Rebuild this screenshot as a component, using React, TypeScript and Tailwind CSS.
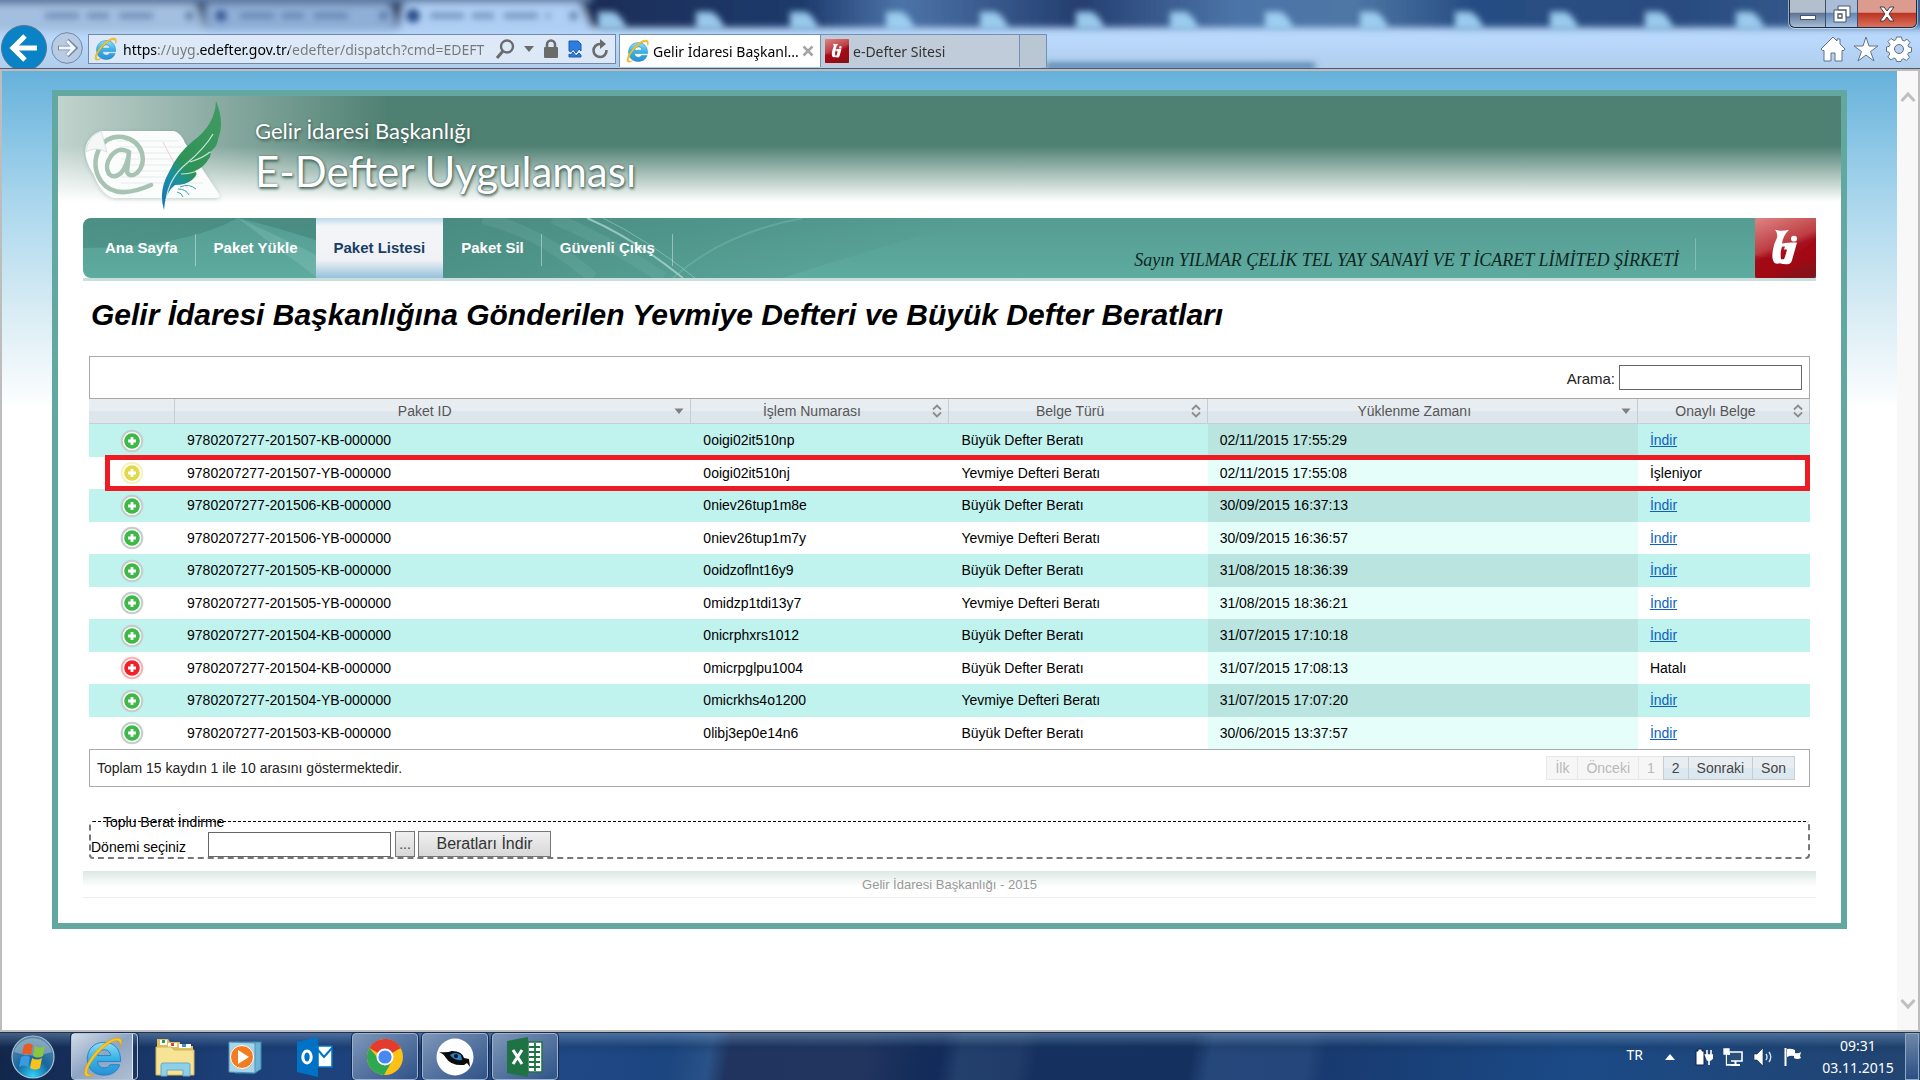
import type { ReactNode } from "react";
import { clsx } from "clsx";

type Status = "ok" | "pending" | "error";

interface Row {
  status: Status;
  packageId: string;
  processNo: string;
  type: string;
  uploadedAt: string;
  result?: string;
  highlighted?: boolean;
}

const KB = "Büyük Defter Beratı";
const YB = "Yevmiye Defteri Beratı";

const rows: Row[] = [
  { status: "ok", packageId: "9780207277-201507-KB-000000", processNo: "0oigi02it510np", type: KB, uploadedAt: "02/11/2015 17:55:29" },
  { status: "pending", packageId: "9780207277-201507-YB-000000", processNo: "0oigi02it510nj", type: YB, uploadedAt: "02/11/2015 17:55:08", result: "İşleniyor", highlighted: true },
  { status: "ok", packageId: "9780207277-201506-KB-000000", processNo: "0niev26tup1m8e", type: KB, uploadedAt: "30/09/2015 16:37:13" },
  { status: "ok", packageId: "9780207277-201506-YB-000000", processNo: "0niev26tup1m7y", type: YB, uploadedAt: "30/09/2015 16:36:57" },
  { status: "ok", packageId: "9780207277-201505-KB-000000", processNo: "0oidzoflnt16y9", type: KB, uploadedAt: "31/08/2015 18:36:39" },
  { status: "ok", packageId: "9780207277-201505-YB-000000", processNo: "0midzp1tdi13y7", type: YB, uploadedAt: "31/08/2015 18:36:21" },
  { status: "ok", packageId: "9780207277-201504-KB-000000", processNo: "0nicrphxrs1012", type: KB, uploadedAt: "31/07/2015 17:10:18" },
  { status: "error", packageId: "9780207277-201504-KB-000000", processNo: "0micrpglpu1004", type: KB, uploadedAt: "31/07/2015 17:08:13", result: "Hatalı" },
  { status: "ok", packageId: "9780207277-201504-YB-000000", processNo: "0micrkhs4o1200", type: YB, uploadedAt: "31/07/2015 17:07:20" },
  { status: "ok", packageId: "9780207277-201503-KB-000000", processNo: "0libj3ep0e14n6", type: KB, uploadedAt: "30/06/2015 13:37:57" },
];

const columns: { label: string; width: string; sort?: "down" | "both" }[] = [
  { label: "", width: "w-[5%]" },
  { label: "Paket ID", width: "w-[30%]", sort: "down" },
  { label: "İşlem Numarası", width: "w-[15%]", sort: "both" },
  { label: "Belge Türü", width: "w-[15%]", sort: "both" },
  { label: "Yüklenme Zamanı", width: "w-[25%]", sort: "down" },
  { label: "Onaylı Belge", width: "w-[10%]", sort: "both" },
];

/* ---------- icons ---------- */

function IeIcon({ className }: { className?: string }) {
  return (
    <svg viewBox="0 0 24 24" className={className} aria-hidden="true">
      <defs>
        <linearGradient id="ieBlue" x1="0" y1="0" x2="0" y2="1">
          <stop offset="0" stopColor="#8fdcf8" />
          <stop offset="0.5" stopColor="#37b2e8" />
          <stop offset="1" stopColor="#2a8fd2" />
        </linearGradient>
      </defs>
      <path
        d="M22.6 14.6H9.4c.2 2.2 1.7 3.6 3.8 3.6 1.5 0 2.6-.6 3.3-1.8h5.6c-1.300 3.900-4.500 6-9 6-5.700 0-9.500-3.700-9.500-9.300S7.500 3.600 13.100 3.600c6 0 9.700 4 9.500 11zM17 11.200c-.200-2-1.600-3.300-3.700-3.300s-3.500 1.300-3.800 3.300z"
        fill="url(#ieBlue)"
        stroke="#1c7fc0"
        strokeWidth=".5"
      />
      <path
        d="M22.800 6.500c.9-2.600.7-4.600-.8-5.200-3-1.200-9.300 2.500-14.200 8.400C3.300 15.200.7 21 2.600 22.700c1 .9 2.900.4 5.100-1-2.300.7-3.700.6-4-.5-.6-2 1.900-6.600 6-11.200C14.200 5 19 1.900 21.200 2.800c1.100.4 1.500 1.700 1.600 3.700z"
        fill="#f8c820"
        stroke="#d99c1b"
        strokeWidth=".4"
      />
    </svg>
  );
}

function GibIcon({ className }: { className?: string }) {
  return (
    <svg viewBox="0 0 61 61" preserveAspectRatio="none" className={className} aria-hidden="true">
      <defs>
        <linearGradient id="gibRed" x1="0.1" y1="0" x2="0.5" y2="1">
          <stop offset="0" stopColor="#dd8080" />
          <stop offset="0.48" stopColor="#bd3e43" />
          <stop offset="0.6" stopColor="#a60f1b" />
          <stop offset="0.85" stopColor="#a00f18" />
          <stop offset="1" stopColor="#7d1a20" />
        </linearGradient>
      </defs>
      <rect width="61" height="61" rx="2" fill="url(#gibRed)" />
      <path d="M0 38Q30 48 61 21V50Q61 61 50 61H0z" fill="#a0000f" opacity=".35" />
      <path
        fillRule="evenodd"
        d="M20 12q6 2 14 0-6 6-7 14 6-1 10-1h5l-5 18q-1 4-5 4-5 0-7-1-3 1-5 0-4-3-2-14 1-6 4-12 1-5-2-8zM27 29q-2 6-1 13h3q2-5 3-10h-3l1-3z"
        fill="#fff"
      />
      <circle cx="39" cy="21" r="3" fill="#fff" />
    </svg>
  );
}

function StatusIcon({ status }: { status: Status }) {
  return (
    <svg
      viewBox="0 0 24 24"
      aria-hidden="true"
      className={clsx(
        "mx-auto size-6",
        status === "ok" && "text-[#3db948]",
        status === "pending" && "text-[#e2d94a]",
        status === "error" && "text-[#f01f28]",
      )}
    >
      <circle cx="12" cy="12" r="10.300" fill="#fff" stroke={status === "ok" ? "#c3cdca" : "currentColor"} strokeOpacity={status === "ok" ? 1 : 0.35} strokeWidth="2" />
      <circle cx="12" cy="12" r="7.800" fill="currentColor" />
      <path d="M12 8v8M8 12h8" stroke="#fff" strokeWidth="2.800" />
    </svg>
  );
}

function SortIcon({ kind }: { kind: "down" | "both" }) {
  if (kind === "down") {
    return (
      <svg viewBox="0 0 10 14" className="h-3.5 w-2.5" aria-hidden="true">
        <path d="M.5 4.500h9L5 10z" fill="#808080" />
      </svg>
    );
  }
  return (
    <svg viewBox="0 0 10 14" className="h-3.5 w-2.5" aria-hidden="true">
      <path d="M1 5.500l4-4 4 4M1 8.500l4 4 4-4" fill="none" stroke="#8c8c8c" strokeWidth="1.800" />
    </svg>
  );
}

function FeatherLogo() {
  return (
    <svg viewBox="0 0 140 124" className="h-[124px] w-[140px] shrink-0" aria-hidden="true">
      <defs>
        <linearGradient id="feather" x1="0.8" y1="0" x2="0.2" y2="1">
          <stop offset="0" stopColor="#3f9a62" />
          <stop offset="0.6" stopColor="#2f9257" />
          <stop offset="0.78" stopColor="#1a90a0" />
          <stop offset="1" stopColor="#1978b4" />
        </linearGradient>
        <filter id="paperShadow" x="-10%" y="-10%" width="120%" height="130%">
          <feDropShadow dx="0" dy="1" stdDeviation="2" floodColor="#4c7a6c" floodOpacity=".35" />
        </filter>
      </defs>
      <path d="M18 35h73q7 2 11 12l34 51q2 4-3 4H30q-12-4-19-23Q0 62 3 50q4-12 15-15z" fill="#fbfcfc" filter="url(#paperShadow)" />
      <path d="M34 45h62M36 51h63M37 57h66M38 63h68M38 69h70M38 75h74M38 81h78M38 87h82" stroke="#e3e9ea" strokeWidth=".8" />
      <path d="M80 46l24 46" stroke="#f3cfd3" strokeWidth="1" />
      <g fill="none" stroke="#a7c3b4" strokeLinecap="round">
        <path d="M46 56Q36 50 28 60q-7 10-2 18 5 5 12-1 6-7 8-20l-2 19q3 6 10 1 8-8 5-20-4-13-19-16-16-2-24 12-8 17 2 32 14 20 50 4" strokeWidth="4.500" />
      </g>
      <path d="M18 35L24 56Q12 50 3 56q2-16 15-21z" fill="#f4f7f6" stroke="#cfdad6" strokeWidth=".7" />
      <path d="M133 5q9 22 2 38 0 7-8 13 2 3-2 8-4 7-13 11 4 3-3 9-6 5-17 5-10 7-11 25-6-19 5-38 8-18 24-31 22-16 23-40z" fill="url(#feather)" />
      <path d="M83 104q3-22 20-36 19-16 27-30M107 66q13-4 20-10M98 78q10 0 18-4" stroke="#e3f3ea" strokeWidth="1.200" fill="none" opacity=".85" />
      <path d="M97 91q9-4 16 2M95 93q8 0 11 6M94 96q5 1 6 5" stroke="#3ba3ae" strokeWidth="1" fill="none" />
    </svg>
  );
}

/* ---------- browser chrome ---------- */

function GlassBackground() {
  const pads = [612, 710, 804, 900, 994, 1090, 1184, 1279, 1374, 1469, 1564, 1659, 1750];
  return (
    <svg viewBox="0 0 1920 69" preserveAspectRatio="none" className="absolute inset-0 size-full" aria-hidden="true">
      <defs>
        <linearGradient id="glassTop" x1="0" x2="1">
          <stop offset="0.3" stopColor="#192c55" />
          <stop offset="0.42" stopColor="#1e3b6c" />
          <stop offset="0.47" stopColor="#4d74a8" />
          <stop offset="0.56" stopColor="#243e70" />
          <stop offset="0.64" stopColor="#4c74a8" />
          <stop offset="0.7" stopColor="#4f77a5" />
          <stop offset="0.76" stopColor="#284e83" />
          <stop offset="0.87" stopColor="#2a4c80" />
          <stop offset="1" stopColor="#3d669a" />
        </linearGradient>
        <linearGradient id="glassBar" x1="0" y1="0" x2="0" y2="1">
          <stop offset="0" stopColor="#b7d5f5" />
          <stop offset="0.6" stopColor="#b9d8fb" />
          <stop offset="1" stopColor="#b0cdec" />
        </linearGradient>
        <filter id="soft" x="-5%" y="-50%" width="110%" height="200%">
          <feGaussianBlur stdDeviation="4" />
        </filter>
        <filter id="softer" x="-5%" y="-50%" width="110%" height="200%">
          <feGaussianBlur stdDeviation="3" />
        </filter>
      </defs>
      <rect width="1920" height="69" fill="url(#glassBar)" />
      <g filter="url(#soft)">
        <path d="M-20-20H1940V28H-20z" fill="url(#glassTop)" />
        <path d="M-20 4H196L206 32H-20z" fill="#a3bfe0" />
        <path d="M206 4H390L398 32H206z" fill="#90afd7" />
        <path d="M404 3H580L594 34H398z" fill="#b0cff4" />
        <path d="M-20-10H590V2H-20z" fill="#6482ab" />
      </g>
      <g filter="url(#softer)">
        {pads.map((x) => (
          <path key={x} d={`M${x - 14} 12h16q10 6 12 18h-28z`} fill="#a5d7f8" opacity=".9" />
        ))}
        <circle cx="221" cy="16" r="6" fill="#3c5f96" />
        <circle cx="413" cy="16" r="7" fill="#294d89" />
        <path d="M45 16h110M240 16h115M430 16h120" stroke="#506f9c" strokeWidth="6" strokeDasharray="34 8 22 10" opacity=".6" />
        <path d="M186 16h7M380 16h7M570 16h7" stroke="#45628c" strokeWidth="8" opacity=".7" />
        <path d="M1046 64h269v6h-269z" fill="#4a7ba4" />
      </g>
    </svg>
  );
}

function WindowControls() {
  return (
    <div className="absolute top-0 right-[3px] flex h-7 w-32 overflow-hidden rounded-b-md border border-t-0 border-[#1f2b40] shadow-[0_0_0_1px_rgba(255,255,255,0.5)]">
      <button aria-label="Simge durumuna küçült" className="flex w-9 items-center justify-center border-r border-[#3d4e68] bg-linear-to-b from-[#b4bfce] from-45% via-[#5d7697] via-50% to-[#a9bdd6]">
        <svg viewBox="0 0 16 16" className="size-4">
          <rect x=".5" y="9.500" width="15" height="4" fill="#fff" stroke="#4a5568" />
        </svg>
      </button>
      <button aria-label="Önceki boyut" className="flex w-8 items-center justify-center border-r border-[#3d4e68] bg-linear-to-b from-[#a9bdd6] from-45% via-[#6387b4] via-50% to-[#a9c3e2]">
        <svg viewBox="0 0 18 18" className="size-[18px]">
          <path d="M5 1h12v11h-4v5H1V5h4z" fill="#fff" stroke="#4a5568" />
          <path d="M5 5h8v7M5 9h4v4H5z" fill="none" stroke="#4a5568" strokeWidth="1.300" />
        </svg>
      </button>
      <button aria-label="Kapat" className="flex flex-1 items-center justify-center bg-linear-to-b from-[#dc9b8f] from-45% via-[#bb3420] via-50% to-[#d9705c]">
        <svg viewBox="0 0 16 16" className="size-4">
          <path d="M1 1h4l3 4 3-4h4l-5 7 5 7h-4l-3-4-3 4H1l5-7z" fill="#fff" stroke="#4a3a44" />
        </svg>
      </button>
    </div>
  );
}

function BrowserBar() {
  return (
    <header className="relative h-[69px] shrink-0 overflow-hidden border-b border-[#4f5a72] font-['Noto_Sans','Open_Sans',sans-serif] text-[14px]">
      <GlassBackground />
      <WindowControls />
      <div className="relative mt-[25px] flex h-11 w-[calc(100%-128px)] items-start">
        <button aria-label="Geri" className="ml-px size-[46px] shrink-0">
          <svg viewBox="0 0 46 46">
            <circle cx="23" cy="23" r="22.500" fill="#0a83c6" stroke="#4f7396" />
            <path d="M36 23H13M24 11L12 23l12 12" fill="none" stroke="#fff" strokeWidth="5" />
          </svg>
        </button>
        <button aria-label="İleri" className="mt-[7px] ml-1 size-8 shrink-0">
          <svg viewBox="0 0 32 32">
            <circle cx="16" cy="16" r="15.300" fill="#b9cbe2" stroke="#7187a6" />
            <path d="M7 16h16M16 8.500l8 7.500-8 7.500" fill="none" stroke="#7187a6" strokeWidth="4.600" />
            <path d="M8 16h14M16 9l7 7-7 7" fill="none" stroke="#f4f8fd" strokeWidth="2.800" />
          </svg>
        </button>
        <div className="mt-[9px] ml-[5px] flex h-[30px] w-[528px] shrink-0 items-center border border-[#7089ab] bg-[#e3ecf7]/85 pr-1.5 pl-1">
          <IeIcon className="size-6 shrink-0" />
          <input
            aria-label="Adres"
            readOnly
            className="ml-1.5 w-[366px] bg-[linear-gradient(90deg,#000_34px,#777_34px,#777_75px,#000_75px,#000_166px,#777_166px)] bg-clip-text text-transparent outline-none"
            defaultValue="https://uyg.edefter.gov.tr/edefter/dispatch?cmd=EDEFT"
          />
          <div className="ml-1.5 flex flex-1 items-center justify-between">
            <svg viewBox="0 0 20 20" className="size-5">
              <circle cx="12" cy="7.500" r="6" fill="none" stroke="#6b6b6b" strokeWidth="2.400" />
              <path d="M8 12l-6 7" stroke="#6b6b6b" strokeWidth="3" />
            </svg>
            <svg viewBox="0 0 10 6" className="h-1.5 w-2.5">
              <path d="M0 0h10L5 6z" fill="#6b6b6b" />
            </svg>
            <svg viewBox="0 0 16 20" className="h-5 w-4">
              <path d="M4 9V5.500a4 4 0 018 0V9" fill="none" stroke="#6b6b6b" strokeWidth="2.600" />
              <rect x="1" y="8" width="14" height="11" rx="1" fill="#6b6b6b" />
            </svg>
            <svg viewBox="0 0 14 18" className="h-[18px] w-3.5">
              <path d="M1 1h9l3 3v7l-2-2-3 4-3-4-2 3-2-1z" fill="#2d7de0" stroke="#1b5cb0" />
              <path d="M1 17v-3l2 1 2-3 3 4 3-3 2 2v2z" fill="#2d7de0" stroke="#1b5cb0" />
            </svg>
            <svg viewBox="0 0 18 20" className="h-5 w-[18px]">
              <path d="M15.500 11A6.500 6.500 0 119 5h3" fill="none" stroke="#6b6b6b" strokeWidth="2.600" />
              <path d="M9 0l6 5-6 5z" fill="#6b6b6b" />
            </svg>
          </div>
        </div>
        <nav aria-label="Sekmeler" className="mt-[9px] ml-[3px] flex h-[33px] border-t border-l border-[#7390b5]">
          <div className="flex w-[200px] items-center bg-white pr-1.5 pl-[5px]">
            <IeIcon className="size-6 shrink-0" />
            <span className="ml-1 whitespace-nowrap text-black">Gelir İdaresi Başkanl...</span>
            <button aria-label="Sekmeyi kapat" className="ml-auto shrink-0">
              <svg viewBox="0 0 12 12" className="size-3">
                <path d="M1.500 1.500l9 9M10.500 1.500l-9 9" stroke="#a5a5a5" strokeWidth="2.500" />
              </svg>
            </button>
          </div>
          <div className="flex w-[200px] items-center border-x border-[#7390b5] bg-[#c0ccd9] pl-1">
            <GibIcon className="size-6" />
            <span className="ml-1 text-[#333]">e-Defter Sitesi</span>
          </div>
          <button aria-label="Yeni sekme" className="w-[27px] border-r border-[#7390b5] bg-[#b9c6d4]" />
        </nav>
      </div>
      <div className="absolute top-9 right-2 flex gap-[7px]">
        <button aria-label="Giriş">
          <svg viewBox="0 0 26 26" className="size-[26px]">
            <path d="M13 1L1 13l1.500 1.500H4V25h7v-8h4v8h7V14.500h2L25 13l-5-5V3h-3v2z" fill="#fff" stroke="#5f728c" />
          </svg>
        </button>
        <button aria-label="Sık kullanılanlar">
          <svg viewBox="0 0 26 26" className="size-[26px]">
            <path d="M13 1l3 9h9l-7.500 5.500L21 25l-8-6-8 6 3.500-9.500L1 10h9z" fill="#fff" stroke="#5f728c" />
          </svg>
        </button>
        <button aria-label="Araçlar">
          <svg viewBox="0 0 26 26" className="size-[26px]">
            <path
              d="M10.500 1h5l.7 3.200 2 .8L21 3.200 24 6.500l-2 3 .7 1.500 2.800.5v4.500l-3 .7-.8 1.800 1.800 2.800-3.200 3.200-2.800-1.800-1.800.8-.7 2h-4.500l-.7-2.700-2-.8-2.800 2L1.800 21l2-3-.8-1.800-2.500-.7V11l2.800-.7.7-1.800-2-3L5 2.500l3 2 1.800-.8z"
              fill="#fff"
              stroke="#5f728c"
            />
            <circle cx="13" cy="13" r="4.500" fill="#b9d0ee" stroke="#5f728c" />
          </svg>
        </button>
      </div>
    </header>
  );
}

/* ---------- page ---------- */

function NavLink({ children, active, divider }: { children: ReactNode; active?: boolean; divider?: boolean }) {
  return (
    <a
      href="#"
      className={clsx(
        "relative flex items-center px-[18px]",
        active
          ? "bg-[linear-gradient(#bcd8ea,#f3f6f9_8px,#f0f1f4_42px,#96c1dc)] text-[#1b3e66]"
          : "text-white",
      )}
    >
      {children}
      {divider && <span className="absolute top-4 right-0 h-8 w-px bg-white/40" />}
    </a>
  );
}

function MainNav() {
  return (
    <div className="relative border-b-[3px] border-[#c9dfdb]">
      <nav className="relative flex h-15 overflow-hidden rounded-l-lg bg-linear-to-b from-[#559c92] to-[#5eab9f] text-[15px] font-bold">
        <svg viewBox="0 0 1733 60" preserveAspectRatio="none" className="absolute inset-0 size-full" aria-hidden="true">
          <defs>
            <linearGradient id="navShade" x1="0" x2="1">
              <stop offset="0" stopColor="#3b776d" stopOpacity=".35" />
              <stop offset=".35" stopColor="#3b776d" stopOpacity=".5" />
              <stop offset="1" stopColor="#3b776d" stopOpacity="0" />
            </linearGradient>
          </defs>
          <path d="M0 0H900Q760 40 700 60H330Q240 20 155 0Q100 30 0 30z" fill="url(#navShade)" />
          <path d="M155 0Q200 20 235 38V60Q180 20 155 0z" fill="#8ccabf" opacity=".3" />
          <path d="M400 0q60 15 110 60M470 0q50 20 110 60" stroke="#8ccabf" strokeWidth="12" opacity=".15" fill="none" />
          <path d="M504 0Q550 20 600 60" stroke="#c4e8e0" strokeWidth="2" opacity=".6" fill="none" />
          <path d="M520 0Q565 22 612 60" stroke="#c4e8e0" strokeWidth="1" opacity=".4" fill="none" />
          <path d="M590 60Q640 15 720 0" stroke="#8ccabf" strokeWidth="2" opacity=".3" fill="none" />
        </svg>
        <div className="relative flex pl-1">
          <NavLink divider>Ana Sayfa</NavLink>
          <NavLink>Paket Yükle</NavLink>
          <NavLink active>Paket Listesi</NavLink>
          <NavLink divider>Paket Sil</NavLink>
          <NavLink divider>Güvenli Çıkış</NavLink>
        </div>
        <div className="relative mt-5 mb-2 ml-auto flex h-8 items-end border-r border-white/25 pr-4 font-['Liberation_Serif',serif] text-[18px] leading-5 font-normal text-[#0c2723] italic">
          Sayın YILMAR ÇELİK TEL YAY SANAYİ VE T İCARET LİMİTED ŞİRKETİ
        </div>
        <GibIcon className="relative ml-[59px] h-[60px] w-[61px]" />
      </nav>
    </div>
  );
}

function PackageTable() {
  return (
    <section>
      <div className="flex h-[43px] items-center justify-end border border-[#a9a9a9] pr-[7px]">
        <label htmlFor="search" className="pt-1 text-[15px] text-[#222]">
          Arama:
        </label>
        <input id="search" className="ml-1 h-[25px] w-[183px] border border-[#666] bg-white px-1" />
      </div>
      <table className="w-full table-fixed border-separate border-spacing-0">
        <thead>
          <tr>
            {columns.map((col) => (
              <th
                key={col.label}
                scope="col"
                className={clsx(
                  col.width,
                  "h-[25px] border-r border-b border-[#c6ced2] bg-linear-to-b from-[#e8edf1] from-50% to-[#dde6ec] to-50% p-0 font-normal text-[#555]",
                )}
              >
                <div className="flex items-center pr-1.5">
                  <span className="flex-1">{col.label}</span>
                  {col.sort && <SortIcon kind={col.sort} />}
                </div>
              </th>
            ))}
          </tr>
        </thead>
        <tbody>
          {rows.map((row, i) => {
            const odd = i % 2 === 0;
            return (
              <tr key={row.processNo} className={clsx(odd ? "h-[33px] bg-[#c0f2ee]" : "h-8 bg-white", row.highlighted && "relative")}>
                <td className="p-0">
                  <StatusIcon status={row.status} />
                  {row.highlighted && <span className="absolute -top-0.5 right-0 -bottom-0.5 left-4 border-[5px] border-[#ed1c24]" />}
                </td>
                <td className="px-3 py-0">{row.packageId}</td>
                <td className="px-3 py-0">{row.processNo}</td>
                <td className="px-3 py-0">{row.type}</td>
                <td className={clsx("px-3 py-0", odd ? "bg-[#b9e4df]" : "bg-[#e6fefa]")}>{row.uploadedAt}</td>
                <td className="px-3 py-0">
                  {row.result ?? (
                    <a href="#" className="text-[#0b62c0] underline">
                      İndir
                    </a>
                  )}
                </td>
              </tr>
            );
          })}
        </tbody>
      </table>
      <div className="flex h-[38px] items-center justify-between border border-[#a9a9a9] pr-3.5 pl-[7px] text-[#222]">
        <span>Toplam 15 kaydın 1 ile 10 arasını göstermektedir.</span>
        <div className="flex h-6">
          {["İlk", "Önceki", "1"].map((label) => (
            <button key={label} disabled className="border border-r-0 border-[#e6e9ea] bg-[#f6f6f6] px-2 text-[#b9b9b9]">
              {label}
            </button>
          ))}
          {["2", "Sonraki", "Son"].map((label) => (
            <button key={label} className="border border-r-0 border-[#c6ced2] bg-linear-to-b from-[#e8edf1] from-50% to-[#dce8f0] to-50% px-2 text-[#444] last:border-r">
              {label}
            </button>
          ))}
        </div>
      </div>
    </section>
  );
}

function BulkDownload() {
  return (
    <fieldset className="relative mt-[34px] flex h-[38px] items-end rounded-sm border-2 border-t border-dashed border-[#777] border-t-black">
      <legend className="absolute -top-2 left-3 leading-4">Toplu Berat İndirme</legend>
      <label htmlFor="period" className="w-[117px] leading-5">
        Dönemi seçiniz
      </label>
      <input id="period" className="h-[25px] w-[183px] border border-[#666] bg-white px-1" />
      <button className="ml-1 h-[26px] w-5 border border-[#777] bg-linear-to-b from-[#f0f0f0] to-[#d8d8d8] text-[#444]">...</button>
      <button className="ml-[3px] h-[26px] w-[133px] border border-[#777] bg-linear-to-b from-[#f0f0f0] to-[#d8d8d8] text-[16px] text-[#333]">Beratları İndir</button>
    </fieldset>
  );
}

function Page() {
  return (
    <main className="flex-1 bg-[linear-gradient(#66b1db,#a9d6ed_129px,#d8ecf4_240px,#fff_340px)] px-[50px] pt-[19px]">
      <div className="border-6 border-[#62a8a0] bg-white">
        <div className="relative flex h-[122px] bg-[linear-gradient(#4f8172,#4f8172_50px,#fff_106px)] pl-[25px]">
          <div className="absolute inset-0 bg-[linear-gradient(90deg,rgba(255,255,255,0.65),transparent_330px)]" />
          <div className="relative flex text-white">
            <FeatherLogo />
            <div className="ml-8 pt-[18px] font-['Lato',sans-serif] [text-shadow:1px_2px_3px_#44645b,0_0_2px_#44645b]">
              <p className="text-[22px] leading-[34px]">Gelir İdaresi Başkanlığı</p>
              <p className="text-[42px] leading-[46px]">E-Defter Uygulaması</p>
            </div>
          </div>
        </div>
        <div className="px-[25px] pb-[25px]">
          <MainNav />
          <div className="px-1.5">
            <h1 className="mt-3.5 mb-[21px] pl-0.5 text-[30px] leading-10 font-bold italic">
              Gelir İdaresi Başkanlığına Gönderilen Yevmiye Defteri ve Büyük Defter Beratları
            </h1>
            <PackageTable />
            <BulkDownload />
          </div>
          <footer className="mt-3 h-[27px] border-b border-[#eee] bg-linear-to-b from-[#dce8e4] to-white to-60% text-center text-[13px] leading-7 text-[#999]">
            Gelir İdaresi Başkanlığı - 2015
          </footer>
        </div>
      </div>
    </main>
  );
}

function Scrollbar() {
  return (
    <div className="flex w-[21px] shrink-0 flex-col items-center justify-between bg-[#f8f8f8] py-5" aria-hidden="true">
      <svg viewBox="0 0 16 12" className="h-3 w-4">
        <path d="M1.500 10L8 3l6.500 7" fill="none" stroke="#bfbfbf" strokeWidth="3" />
      </svg>
      <svg viewBox="0 0 16 12" className="h-3 w-4">
        <path d="M1.500 2L8 9l6.500-7" fill="none" stroke="#bfbfbf" strokeWidth="3" />
      </svg>
    </div>
  );
}

/* ---------- taskbar ---------- */

function TaskButton({ label, framed, children }: { label: string; framed?: boolean; children: ReactNode }) {
  return (
    <button
      aria-label={label}
      className={clsx(
        "flex h-[47px] w-[66px] items-center justify-center",
        framed && "rounded-sm border border-[#9db2cf] bg-linear-to-br from-[#7f97b8] to-[#2f5388] shadow-[0_0_0_1px_#152a4c]",
      )}
    >
      {children}
    </button>
  );
}

function Taskbar() {
  return (
    <footer className="flex h-12 shrink-0 items-center border-t border-[#22324a] bg-[linear-gradient(180deg,rgba(120,155,190,0.5),rgba(20,50,90,0.25)_14px,transparent_22px),linear-gradient(100deg,#12264a,#1c3f78_12%,#1f4885_30%,#1c4680_35%,#2a5288_37%,#20345f_38%,#22355f_45%,#132c5a_48%,#122b5a_49%,#233f6c_50%,#213c69_53%,#15305f_54%,#14305f_62%,#25477a_63%,#24467a_68%,#183a70_69%,#1b4a86_82%,#224470_100%)] font-['Noto_Sans','Open_Sans',sans-serif] text-white">
      <button aria-label="Başlat" className="ml-[11px] size-11">
        <svg viewBox="0 0 44 44">
          <defs>
            <radialGradient id="orb" cx=".5" cy=".95" r=".9">
              <stop offset="0" stopColor="#2fd3fb" />
              <stop offset=".45" stopColor="#15669f" />
              <stop offset="1" stopColor="#5f88a8" />
            </radialGradient>
          </defs>
          <circle cx="22" cy="22" r="21" fill="url(#orb)" stroke="#a9c4d8" strokeWidth="1.200" />
          <path d="M3 17A20 20 0 0141 17Q22 24 3 17z" fill="#fff" opacity=".28" />
          <path d="M13 10q5-3 9 0l-2 10q-5-3-9 0z" fill="#ea5a24" />
          <path d="M24 11q5 3 10 0l-2 10q-5 3-10 0z" fill="#8cc63f" />
          <path d="M10 22q5-3 9 0l-2 10q-4-3-9 0z" fill="#3a9be0" />
          <path d="M21 23q5 3 10 0l-2 10q-5 3-10 0z" fill="#fbc21b" />
        </svg>
      </button>
      <div className="ml-4 flex h-[47px] w-[67px] rounded-sm border border-[#b4c3d8] pr-1 shadow-[0_0_0_1px_#152a4c]">
        <button aria-label="Internet Explorer" className="flex flex-1 items-center justify-center border-r border-[#e3ebf5] bg-linear-to-br from-[#d3dbe8] via-[#8ea4c3] to-[#b0bed2]">
          <IeIcon className="size-[42px]" />
        </button>
      </div>
      <div className="ml-1 flex gap-1">
        <TaskButton label="Dosya Gezgini">
          <svg viewBox="0 0 42 40" className="h-10 w-[42px]">
            <path d="M3 8V2h11l2 3h10v4h13v28H3z" fill="#e2be5c" />
            <path d="M6 3h7v5H6zM14 6h9v4h-9zM25 7h12v4H25z" fill="#fff" />
            <path d="M8 3h3v3H8z" fill="#2f9b58" />
            <path d="M17 6h3v3h-3z" fill="#e3402f" />
            <path d="M28 7h4v3h-4z" fill="#3f8fd2" />
            <path d="M2 10h15l3 3h20v25H2z" fill="#f7e394" stroke="#d5b659" />
            <path d="M7 39V28q0-2 2-2h25q2 0 2 2v11h-7v-6H13v6z" fill="#8fd0e8" stroke="#62a9cc" />
          </svg>
        </TaskButton>
        <TaskButton label="Windows Media Player">
          <svg viewBox="0 0 36 36" className="size-9">
            <path d="M8 3h26v27l-6 4H8z" fill="#6bb4d6" stroke="#3f86ac" />
            <path d="M2 3l26 1v30L2 33z" fill="#a8d4e8" stroke="#4e93b5" />
            <circle cx="15" cy="18" r="11.500" fill="#f47c20" stroke="#fff" />
            <path d="M11 11l11 7-11 7z" fill="#fff" />
          </svg>
        </TaskButton>
        <TaskButton label="Outlook">
          <svg viewBox="0 0 38 40" className="h-10 w-[38px]">
            <path d="M1 5l21-5v40L1 35z" fill="#0072c6" />
            <path d="M22 9h14v21H22z" fill="#fff" stroke="#0072c6" strokeWidth="1.500" />
            <path d="M22 13l6 7 8-9" fill="none" stroke="#0072c6" strokeWidth="2" />
            <ellipse cx="11" cy="20" rx="4.200" ry="6" fill="none" stroke="#fff" strokeWidth="3" />
          </svg>
        </TaskButton>
        <TaskButton label="Chrome" framed>
          <svg viewBox="0 0 36 36" className="size-9">
            <circle cx="18" cy="18" r="18" fill="#fbc116" />
            <path d="M18 18L2.400 9A18 18 0 0133.600 9z" fill="#e33b2e" />
            <path d="M18 0A18 18 0 0133.600 9.500H18z" fill="#e33b2e" />
            <path d="M2.400 9A18 18 0 0017 36l8-14-7-4-8 0z" fill="#2da94f" />
            <circle cx="18" cy="18" r="8.500" fill="#fff" />
            <circle cx="18" cy="18" r="6.600" fill="#4688f1" />
          </svg>
        </TaskButton>
        <TaskButton label="Logo" framed>
          <svg viewBox="0 0 38 38" className="size-[38px]">
            <circle cx="19" cy="19" r="18.500" fill="#fff" />
            <path d="M3 14q8 1 13-1 10 0 12 7l5 1 1 8-3-4-3 2q-13 1-18-7-2-4-7-6z" fill="#0b0b0b" />
            <path d="M14 17q5-4 11 0l1 5q-8 1-12-5z" fill="#2d84c4" />
            <circle cx="20" cy="18" r="2" fill="#08131f" />
          </svg>
        </TaskButton>
        <TaskButton label="Excel" framed>
          <svg viewBox="0 0 36 40" className="h-10 w-9">
            <path d="M21 5h14v30H21z" fill="#fff" stroke="#1f7244" strokeWidth="1.500" />
            <path d="M22 10h11M22 15h11M22 20h11M22 25h11M22 30h11M28 6v28" stroke="#1f7244" strokeWidth="1.800" />
            <path d="M0 4l21-4v40L0 36z" fill="#1f7244" />
            <path d="M6 13l9 14M15 13L6 27" stroke="#fff" strokeWidth="3" />
          </svg>
        </TaskButton>
      </div>
      <div className="ml-auto flex items-center">
        <span className="mr-[22px] pb-1 text-[14px] leading-4">TR</span>
        <svg viewBox="0 0 10 6" className="mr-[18px] h-1.5 w-2.5">
          <path d="M0 6l5-6 5 6z" fill="#fff" />
        </svg>
        <svg viewBox="0 0 20 20" className="mr-2.5 size-5">
          <path d="M3 4h2V2h4v2h2v14H3z" fill="#fff" stroke="#0e2140" />
          <path d="M14 3v5M18 3v5M12.500 8h7v3l-2 2h-3zM16 13v5" stroke="#fff" strokeWidth="1.600" fill="#fff" />
        </svg>
        <svg viewBox="0 0 20 20" className="mr-2.5 size-5">
          <path d="M6 5h13v9H6z" fill="#2a5078" stroke="#fff" strokeWidth="1.600" />
          <path d="M8 18h9M12.500 14v4" stroke="#fff" strokeWidth="2" />
          <path d="M1 2h5v5H1zM3.500 7v11H8" fill="#fff" stroke="#fff" strokeWidth="1.300" />
          <path d="M4 8h4v9H4z" fill="#24507f" />
        </svg>
        <svg viewBox="0 0 20 20" className="mr-2.5 size-5">
          <path d="M1 7h3l6-6v18l-6-6H1z" fill="#fff" stroke="#0e2140" strokeWidth=".6" />
          <path d="M13 7q2 3 0 6M16 5q3.500 5 0 10" stroke="#cfe0f2" strokeWidth="1.400" fill="none" />
        </svg>
        <svg viewBox="0 0 20 20" className="size-5">
          <path d="M2.500 1v18" stroke="#fff" strokeWidth="2" />
          <path d="M4 2q4-1 8 1v3q3 1 6-1l-1 4 1 2q-4 2-7 0V9q-3-1-7 1z" fill="#fff" />
        </svg>
        <div className="ml-2 w-[94px] text-center text-[14px] leading-[22px]">
          <div>09:31</div>
          <div>03.11.2015</div>
        </div>
        <button aria-label="Masaüstünü göster" className="mr-px h-[47px] w-3.5 border border-[#8ea9c8] bg-linear-to-b from-[#6f87a8] to-[#2b4f83]" />
      </div>
    </footer>
  );
}

export default function App() {
  return (
    <div className="flex h-screen flex-col overflow-hidden bg-white font-['Liberation_Sans',Arial,sans-serif] text-[14px] text-black">
      <BrowserBar />
      <div className="flex min-h-0 flex-1 overflow-hidden border-2 border-[#bdbdbd]">
        <Page />
        <Scrollbar />
      </div>
      <Taskbar />
    </div>
  );
}
